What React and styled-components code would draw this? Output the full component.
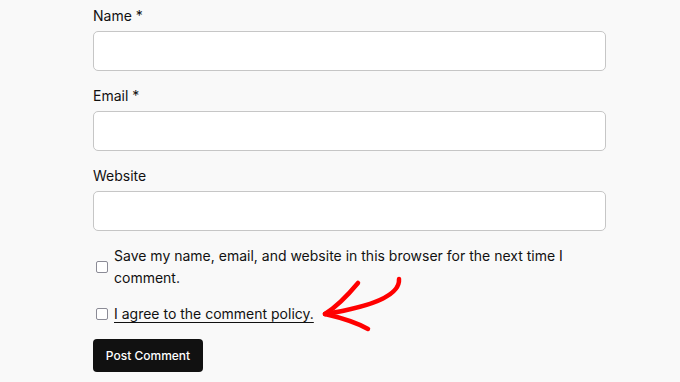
import React from "react";
import styled, { createGlobalStyle } from "styled-components";

const Global = createGlobalStyle`
  html, body {
    margin: 0;
    padding: 0;
    background: #f9f9f9;
  }
  body {
    font-family: Inter, "Noto Sans", sans-serif;
    color: #111;
  }
`;

const Form = styled.form`
  width: 513px;
  margin-left: 93px;
  padding-top: 5px;
  display: flex;
  flex-direction: column;
`;

const Field = styled.div`
  display: flex;
  flex-direction: column;
  gap: 4px;
  margin-bottom: 14px;
`;

const Label = styled.label`
  font-size: 14px;
  line-height: 22px;
`;

const Input = styled.input`
  box-sizing: border-box;
  height: 40px;
  width: 100%;
  margin: 0;
  background: #fff;
  border: 1.5px solid #c6c6c6;
  border-radius: 5px;
  font: inherit;
`;

const CheckRow = styled.div`
  display: flex;
  align-items: center;
  gap: 6px;
  margin-top: ${p => p.$top || 0}px;
  position: relative;
`;

const Box = styled.span`
  flex: none;
  box-sizing: border-box;
  width: 12px;
  height: 12px;
  margin-left: 3px;
  border: 1.5px solid #8b8b96;
  border-radius: 2px;
  background: #fff;
`;

const CheckText = styled.span`
  font-size: 14px;
  line-height: 22px;
  text-decoration: ${p => (p.$link ? "underline" : "none")};
  text-underline-offset: 3px;
  text-decoration-thickness: 1px;
`;

const Arrow = styled.svg`
  position: absolute;
  left: 225px;
  top: -40px;
  overflow: visible;
`;

const Button = styled.button`
  align-self: flex-start;
  margin-top: 14px;
  width: 110px;
  height: 33px;
  padding: 0;
  background: #111;
  color: #fff;
  border: none;
  border-radius: 4px;
  font-family: Inter, "Noto Sans", sans-serif;
  font-size: 12px;
  font-weight: 500;
`;

export default function App() {
  return (
    <>
      <Global />
      <Form>
        <Field>
          <Label>Name *</Label>
          <Input />
        </Field>
        <Field>
          <Label>Email *</Label>
          <Input />
        </Field>
        <Field>
          <Label>Website</Label>
          <Input />
        </Field>
        <CheckRow>
          <Box />
          <CheckText>
            Save my name, email, and website in this browser for the next time I
            comment.
          </CheckText>
        </CheckRow>
        <CheckRow $top={14}>
          <Box />
          <CheckText $link>I agree to the comment policy.</CheckText>
          <Arrow width="80" height="60" viewBox="0 0 80 60">
            <g fill="none" stroke="#f00" strokeWidth="4.5" strokeLinecap="round" strokeLinejoin="round">
              <path d="M81 16 C82 30 62 42 7 51" />
              <path d="M40 20 C30 32 18 44 7 51" />
              <path d="M7 51 C20 54 36 58 50 66" />
            </g>
          </Arrow>
        </CheckRow>
        <Button type="button">Post Comment</Button>
      </Form>
    </>
  );
}
